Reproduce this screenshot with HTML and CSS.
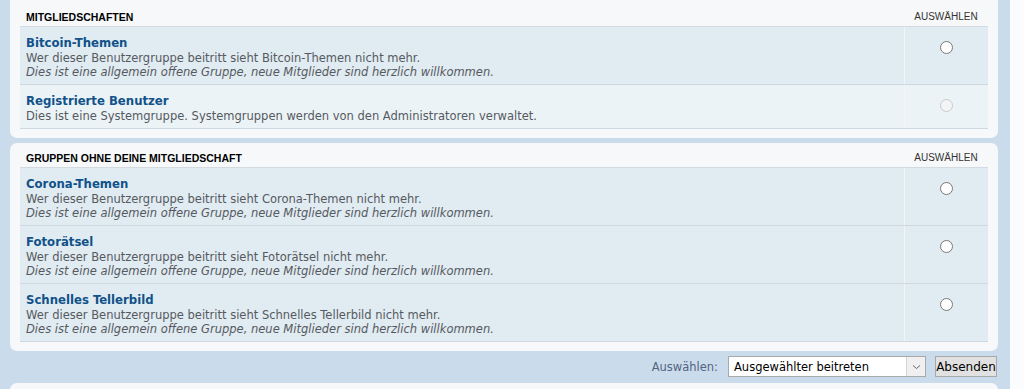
FILE: index.html
```html
<!DOCTYPE html>
<html lang="de">
<head>
<meta charset="utf-8">
<title>Benutzergruppen</title>
<link rel="stylesheet" href="styles.css">
</head>
<body>
<div class="page">
  <main class="main">
    <form class="groups-form">
      <section class="panel panel-first">
        <div class="list-header">
          <span class="hdr-title">Mitgliedschaften</span>
          <span class="hdr-select">Auswählen</span>
        </div>
        <div class="row row-dark">
          <div class="info">
            <a class="group-title" href="#">Bitcoin-Themen</a>
            <div class="desc">Wer dieser Benutzergruppe beitritt sieht Bitcoin-Themen nicht mehr.</div>
            <div class="desc italic">Dies ist eine allgemein offene Gruppe, neue Mitglieder sind herzlich willkommen.</div>
          </div>
          <div class="pick"><input type="radio" name="selected"></div>
        </div>
        <div class="row row-light">
          <div class="info">
            <a class="group-title" href="#">Registrierte Benutzer</a>
            <div class="desc">Dies ist eine Systemgruppe. Systemgruppen werden von den Administratoren verwaltet.</div>
          </div>
          <div class="pick"><input type="radio" name="selected" disabled></div>
        </div>
      </section>

      <section class="panel">
        <div class="list-header">
          <span class="hdr-title">Gruppen ohne deine Mitgliedschaft</span>
          <span class="hdr-select">Auswählen</span>
        </div>
        <div class="row row-dark">
          <div class="info">
            <a class="group-title" href="#">Corona-Themen</a>
            <div class="desc">Wer dieser Benutzergruppe beitritt sieht Corona-Themen nicht mehr.</div>
            <div class="desc italic">Dies ist eine allgemein offene Gruppe, neue Mitglieder sind herzlich willkommen.</div>
          </div>
          <div class="pick"><input type="radio" name="selected"></div>
        </div>
        <div class="row row-dark">
          <div class="info">
            <a class="group-title" href="#">Fotorätsel</a>
            <div class="desc">Wer dieser Benutzergruppe beitritt sieht Fotorätsel nicht mehr.</div>
            <div class="desc italic">Dies ist eine allgemein offene Gruppe, neue Mitglieder sind herzlich willkommen.</div>
          </div>
          <div class="pick"><input type="radio" name="selected"></div>
        </div>
        <div class="row row-dark">
          <div class="info">
            <a class="group-title" href="#">Schnelles Tellerbild</a>
            <div class="desc">Wer dieser Benutzergruppe beitritt sieht Schnelles Tellerbild nicht mehr.</div>
            <div class="desc italic">Dies ist eine allgemein offene Gruppe, neue Mitglieder sind herzlich willkommen.</div>
          </div>
          <div class="pick"><input type="radio" name="selected"></div>
        </div>
      </section>

      <div class="actions">
        <label class="action-label" for="action">Auswählen:</label>
        <div class="select-wrap">
          <select id="action" class="select">
            <option>Ausgewählter beitreten</option>
          </select>
          <span class="select-arrow">
            <svg width="9" height="6" viewBox="0 0 9 6"><path d="M1 1.5 L4.5 4.5 L8 1.5" fill="none" stroke="#666" stroke-width="1"/></svg>
          </span>
        </div>
        <button type="button" class="btn">Absenden</button>
      </div>

      <section class="panel panel-next"></section>
    </form>
  </main>
  <div class="edge"></div>
</div>
</body>
</html>
```

FILE: styles.css
```css
html, body {
  margin: 0;
  padding: 0;
}

body {
  background: #cadceb;
  font-family: "DejaVu Sans", Verdana, sans-serif;
  overflow: hidden;
  height: 389px;
}

.page {
  display: flex;
  min-height: 389px;
}

.main {
  flex: 1;
  padding: 0 12px 0 10px;
}

.edge {
  width: 14px;
  background: #fbfcfd;
}

.panel {
  background: #f7f8fa;
  border-radius: 7px;
  padding: 5px 10px 9px;
}

.panel-first {
  margin-top: -8px;
  padding-top: 15px;
  margin-bottom: 5px;
}

.list-header {
  display: flex;
  align-items: center;
  height: 19px;
  border-bottom: 1px solid #d3dbe1;
}

.hdr-title {
  flex: 1;
  padding-left: 6px;
  font-family: "Liberation Sans", Arial, sans-serif;
  font-weight: bold;
  font-size: 10.5px;
  text-transform: uppercase;
  color: #000;
}

.hdr-select {
  width: 84px;
  text-align: center;
  font-family: "Liberation Sans", Arial, sans-serif;
  font-size: 10px;
  text-transform: uppercase;
  color: #333;
}

.row {
  display: flex;
  border-bottom: 1px solid #cfd8df;
}

.row-dark {
  background: #e1ebf2;
}

.row-light {
  background: #ecf3f7;
}

.info {
  flex: 1;
  padding: 8px 6px 5px;
}

.group-title {
  display: block;
  font-family: "DejaVu Sans Condensed", "DejaVu Sans", sans-serif;
  font-weight: bold;
  font-size: 13px;
  line-height: 16px;
  color: #105289;
  text-decoration: none;
}

.desc {
  font-size: 11.5px;
  line-height: 14px;
  color: #555a60;
}

.italic {
  font-style: italic;
  font-size: 11.5px;
}

.pick {
  width: 83px;
  border-left: 1px solid #f2f6f9;
  display: flex;
  justify-content: center;
  align-items: flex-start;
  padding-top: 14px;
}

.pick input {
  margin: 0;
  width: 13px;
  height: 13px;
}

.actions {
  display: flex;
  justify-content: flex-end;
  align-items: center;
  margin: 5px 1px 0 0;
  height: 21px;
}

.action-label {
  font-size: 11.5px;
  color: #536482;
  margin-right: 10px;
}

.select-wrap {
  display: flex;
  height: 21px;
  width: 198px;
  box-sizing: border-box;
  border: 1px solid #a9a9a9;
  background: #fff;
  margin-right: 9px;
}

.select {
  flex: 1;
  appearance: none;
  -webkit-appearance: none;
  border: 0;
  background: #fff;
  font-family: "DejaVu Sans", Verdana, sans-serif;
  font-size: 11.5px;
  color: #000;
  padding: 0 0 0 5px;
  margin: 0;
  outline: none;
}

.select-arrow {
  width: 18px;
  display: flex;
  align-items: center;
  justify-content: center;
  background: #f0f0f0;
  border-left: 1px solid #d4d4d4;
}

.btn {
  height: 21px;
  width: 62px;
  box-sizing: border-box;
  padding: 0;
  border: 1px solid #a8a8a8;
  background: #e1e1e1;
  font-family: "DejaVu Sans", Verdana, sans-serif;
  font-size: 12px;
  color: #000;
}

.panel-next {
  margin-top: 6px;
  height: 40px;
  padding: 0;
}
```
